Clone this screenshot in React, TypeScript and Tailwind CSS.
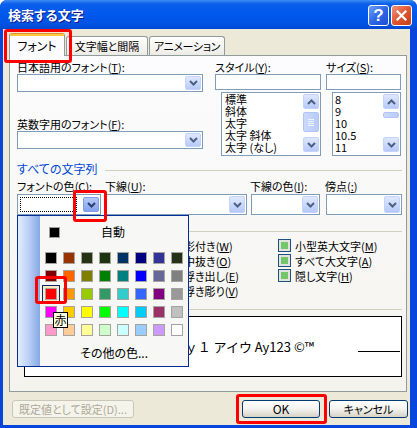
import React from 'react'

const PALETTE = [
  ['#000000', '#993300', '#263214', '#1e3312', '#003366', '#000080', '#333399', '#233218'],
  ['#800000', '#ff6600', '#808000', '#008000', '#008080', '#0000ff', '#666699', '#808080'],
  ['#ff0000', '#ff9900', '#99cc00', '#339966', '#33cccc', '#3366ff', '#800080', '#999999'],
  ['#ff00ff', '#ffcc00', '#ffff00', '#00ff00', '#00ffff', '#00ccff', '#993366', '#c0c0c0'],
  ['#ff99cc', '#ffcc99', '#ffff99', '#ccffcc', '#ccffff', '#99ccff', '#cc99ff', '#ffffff'],
]

const EFFECTS = [
  ['取り消し線', 'K', '影付き', 'W', '小型英大文字', 'M'],
  ['二重取り消し線', 'L', '中抜き', 'O', 'すべて大文字', 'A'],
  ['上付き', 'P', '浮き出し', 'E', '隠し文字', 'H'],
  ['下付き', 'B', '浮き彫り', 'V', '', ''],
]

function Key({ t, k, s = ':' }: { t: string; k: string; s?: string }) {
  return (
    <>
      {t}(<u className="underline-offset-1">{k}</u>){s}
    </>
  )
}

function Chevron({ color = '#4d6185' }: { color?: string }) {
  return (
    <svg width="9" height="6" viewBox="0 0 9 6">
      <path d="M1 1l3.5 3.5L8 1" fill="none" stroke={color} strokeWidth="2" />
    </svg>
  )
}

function UpChevron() {
  return (
    <svg width="9" height="6" viewBox="0 0 9 6">
      <path d="M1 5l3.5-3.5L8 5" fill="none" stroke="#4d6185" strokeWidth="2" />
    </svg>
  )
}

function DropButton({ hot = false }: { hot?: boolean }) {
  return (
    <div
      className={
        hot
          ? 'flex w-[16px] items-center justify-center rounded-[2px] border border-[#7f9de9] bg-gradient-to-b from-[#b5c9fa] to-[#84a1ed]'
          : 'flex w-[16px] items-center justify-center rounded-[2px] border border-[#c3d3fd] bg-gradient-to-b from-[#dfe8fe] to-[#b6c9f7]'
      }
    >
      <Chevron color={hot ? '#2b3e6b' : '#4d6185'} />
    </div>
  )
}

function Combo({ className = '' }: { className?: string }) {
  return (
    <div className={`flex justify-end border border-[#7f9db9] bg-white p-px ${className}`}>
      <DropButton />
    </div>
  )
}

function ScrollBar({ thumb }: { thumb: number }) {
  return (
    <div className="ml-auto mr-px flex w-[16px] shrink-0 flex-col pb-[3px] pt-px">
      <div className="flex h-[15px] items-center justify-center rounded-[2px] border border-[#c3d3fd] bg-gradient-to-b from-[#dfe8fe] to-[#b6c9f7]">
        <UpChevron />
      </div>
      <div
        className="mt-[3px] flex flex-col items-center justify-center gap-px rounded-[2px] border border-[#b1c6f7] bg-gradient-to-r from-[#cad9fc] to-[#b9cbf7]"
        style={{ height: thumb }}
      >
        {thumb > 10 && (
          <>
            <span className="h-px w-[6px] bg-[#eef3fe]" />
            <span className="h-px w-[6px] bg-[#eef3fe]" />
            <span className="h-px w-[6px] bg-[#eef3fe]" />
            <span className="h-px w-[6px] bg-[#eef3fe]" />
          </>
        )}
      </div>
      <div className="flex-1" />
      <div className="flex h-[15px] items-center justify-center rounded-[2px] border border-[#c3d3fd] bg-gradient-to-b from-[#dfe8fe] to-[#b6c9f7]">
        <Chevron />
      </div>
    </div>
  )
}

function Check() {
  return (
    <span className="flex h-[13px] w-[13px] shrink-0 items-center justify-center border border-[#1c5180] bg-[#e3e2dc]">
      <span className="h-[7px] w-[7px] bg-[#73c66b]" />
    </span>
  )
}

function Header({ text, blue = false }: { text: string; blue?: boolean }) {
  return (
    <div className="flex h-[14px] items-center">
      <span className={blue ? 'text-[12px] leading-[14px] text-[#0046d5]' : 'leading-[14px]'}>{text}</span>
      <div className="ml-[8px] mt-[3px] h-px flex-1 bg-[#d0d0bf]" />
    </div>
  )
}

export default function App() {
  return (
    <div className="relative h-[428px] w-[417px] overflow-hidden rounded-t-[7px] bg-[#0845dc] font-['Noto_Sans_CJK_JP','Noto_Sans',sans-serif] text-[11px] text-black [font-feature-settings:'palt']">
      {/* Title bar */}
      <div className="flex h-[29px] items-start bg-[linear-gradient(180deg,#3d8cf5_0%,#0a5ee9_14%,#0058ee_45%,#0054e3_80%,#0048d4_100%)] pl-[8px] pr-[5px]">
        <span className="mt-[7px] text-[13px] font-bold leading-[16px] text-white [text-shadow:1px_1px_#0a1883]">
          検索する文字
        </span>
        <div className="ml-auto mt-[5px] flex gap-[2px]">
          <div className="flex h-[21px] w-[21px] items-center justify-center rounded-[3px] border border-white bg-gradient-to-br from-[#6fa0fb] via-[#2e68e6] to-[#1d4fd3] font-['Liberation_Sans',sans-serif] text-[17px] font-bold leading-none text-white">
            ?
          </div>
          <div className="flex h-[21px] w-[21px] items-center justify-center rounded-[3px] border border-white bg-gradient-to-br from-[#f0937a] via-[#e05530] to-[#c4401c]">
            <svg width="11" height="11" viewBox="0 0 11 11">
              <path d="M1.5 1.5l8 8M9.5 1.5l-8 8" stroke="white" strokeWidth="2.2" strokeLinecap="square" />
            </svg>
          </div>
        </div>
      </div>

      {/* Body */}
      <div className="ml-[3px] mr-[7px] flex h-[396px] flex-col bg-[#ece9d8]">
        {/* Tabs */}
        <div className="flex h-[26px] items-end whitespace-nowrap pl-[6px] text-[12px]">
          <div className="relative z-10 mb-[-1px] flex h-[23px] w-[56px] flex-col rounded-t-[3px] border-x border-t border-x-[#919b9c] border-t-[#e68b2c] bg-[#fcfcfe]">
            <div className="h-[2px] bg-[#ffc73c]" />
            <div className="flex flex-1 items-center justify-center leading-[14px]">フォント</div>
          </div>
          <div className="ml-px flex h-[19px] w-[82px] items-center justify-center rounded-t-[3px] border border-b-0 border-[#919b9c] bg-gradient-to-b from-white to-[#ecebe6] text-[11px] leading-[14px]">
            文字幅と間隔
          </div>
          <div className="ml-px flex h-[19px] w-[76px] items-center justify-center rounded-t-[3px] border border-b-0 border-[#919b9c] bg-gradient-to-b from-white to-[#ecebe6] text-[11px] leading-[14px] tracking-[-0.3px]">
            アニメーション
          </div>
        </div>

        {/* Panel */}
        <div className="ml-[6px] flex h-[337px] w-[398px] flex-col border border-[#919b9c] bg-gradient-to-b from-[#fcfcfe] to-[#f4f3ee] pl-[7px] pr-[4px] pt-[5px]">
          <div className="flex">
            <div className="w-[186px]">
              <div className="h-[13px] whitespace-nowrap leading-[13px]">
                <Key t="日本語用のフォント" k="T" />
              </div>
              <Combo className="h-[18px]" />
              <div className="mt-[26px] h-[13px] whitespace-nowrap leading-[13px]">
                <Key t="英数字用のフォント" k="F" />
              </div>
              <Combo className="h-[18px]" />
            </div>
            <div className="ml-[12px] w-[106px]">
              <div className="h-[13px] whitespace-nowrap leading-[13px]">
                <Key t="スタイル" k="Y" />
              </div>
              <div className="h-[16px] border border-[#7f9db9] bg-white" />
              <div className="ml-[6px] mt-[2px] flex h-[64px] w-[100px] border border-[#7f9db9] bg-white">
                <div className="flex flex-col whitespace-nowrap pl-[3px] text-[11px] leading-[12px]">
                  <span>標準</span>
                  <span>斜体</span>
                  <span>太字</span>
                  <span>太字 斜体</span>
                  <span>太字 (なし)</span>
                </div>
                <ScrollBar thumb={20} />
              </div>
            </div>
            <div className="ml-[5px] w-[76px]">
              <div className="h-[13px] whitespace-nowrap leading-[13px]">
                <Key t="サイズ" k="S" />
              </div>
              <div className="h-[16px] w-[75px] border border-[#7f9db9] bg-white" />
              <div className="ml-[6px] mt-[2px] flex h-[64px] w-[69px] border border-[#7f9db9] bg-white">
                <div className="flex flex-col pl-[2px] text-[11px] leading-[12px]">
                  <span>8</span>
                  <span>9</span>
                  <span>10</span>
                  <span>10.5</span>
                  <span>11</span>
                </div>
                <ScrollBar thumb={6} />
              </div>
            </div>
          </div>

          <div className="mt-[6px]">
            <Header text="すべての文字列" blue />
          </div>

          <div className="mt-[3px] flex">
            <div className="w-[84px]">
              <div className="h-[14px] whitespace-nowrap leading-[14px]">
                <Key t="フォントの色" k="C" />
              </div>
              <div className="mt-px flex h-[21px] border border-[#7f9db9] bg-white p-px">
                <div className="m-px w-[57px] border border-dotted border-black" />
                <div className="ml-auto flex py-px">
                  <DropButton hot />
                </div>
              </div>
            </div>
            <div className="ml-[4px] w-[142px]">
              <div className="h-[14px] whitespace-nowrap leading-[14px]">
                <Key t="下線" k="U" />
              </div>
              <Combo className="mt-px h-[21px]" />
            </div>
            <div className="ml-[4px] w-[69px]">
              <div className="-ml-px h-[14px] whitespace-nowrap leading-[14px]">
                <Key t="下線の色" k="I" />
              </div>
              <Combo className="mt-px h-[21px]" />
            </div>
            <div className="ml-[6px] w-[76px]">
              <div className="-ml-px h-[14px] whitespace-nowrap leading-[14px]">
                <Key t="傍点" k=":" s="" />
              </div>
              <Combo className="mt-px h-[21px]" />
            </div>
          </div>

          <div className="mt-[8px]">
            <Header text="効果" />
          </div>

          <div className="mt-px grid grid-cols-[150px_111px_1fr]">
            {EFFECTS.map((row, i) => (
              <React.Fragment key={i}>
                {[0, 2, 4].map((c) => (
                  <div key={c} className="flex h-[15px] items-center whitespace-nowrap">
                    {row[c] && (
                      <>
                        <Check />
                        <span className="ml-[4px] leading-[14px]">
                          <Key t={row[c]} k={row[c + 1]} s="" />
                        </span>
                      </>
                    )}
                  </div>
                ))}
              </React.Fragment>
            ))}
          </div>

          <div className="mt-[3px]">
            <Header text="プレビュー" />
          </div>

          <div className="ml-[7px] mt-px flex h-[61px] w-[378px] items-center justify-end border border-black bg-white pr-px">
            <span className="whitespace-nowrap text-[13px] leading-[16px] [font-feature-settings:normal]">
              あア亜Ａｙ１ アイウ Ay123 ©™
            </span>
            <span className="ml-[44px] mt-[10px] h-px w-[42px] bg-black" />
          </div>
        </div>

        {/* Buttons */}
        <div className="mt-[8px] flex h-[18px] pl-[9px] pr-[2px]">
          <div className="flex w-[122px] items-center justify-center whitespace-nowrap rounded-[3px] border border-[#c9c7ba] bg-[#f5f4ea] leading-[14px] text-[#aca899]">
            既定値として設定(D)...
          </div>
          <div className="ml-auto flex w-[78px] items-center justify-center rounded-[3px] border border-[#003c74] bg-gradient-to-b from-white via-[#f3f3ef] to-[#d8d2c6] text-[12px] leading-[14px]">
            OK
          </div>
          <div className="ml-[9px] flex w-[79px] items-center justify-center rounded-[3px] border border-[#003c74] bg-gradient-to-b from-white via-[#f3f3ef] to-[#d8d2c6] leading-[14px]">
            キャンセル
          </div>
        </div>
      </div>

      {/* Colour popup */}
      <div className="absolute left-[17px] top-[215px] z-20 flex h-[152px] w-[172px] border border-[#002d96] bg-[#f7f7f5]">
        <div className="w-[22px] bg-gradient-to-r from-[#e3eefd] via-[#b9cff5] to-[#86a8e2]" />
        <div className="flex flex-1 flex-col">
          <div className="ml-[9px] mt-[9px] flex items-center">
            <span className="h-[11px] w-[11px] border border-[#9d9d96] bg-black" />
            <span className="ml-[41px] text-[12px] leading-[14px]">自動</span>
          </div>
          <div className="ml-[2px] mt-[10px] grid grid-cols-[repeat(8,18px)]">
            {PALETTE.flat().map((c, i) => (
              <div
                key={i}
                className={
                  i === 16
                    ? 'flex h-[18px] w-[18px] items-center justify-center border border-[#0a246a] bg-[#fbe9c5]'
                    : 'flex h-[18px] w-[18px] items-center justify-center'
                }
              >
                <span className="h-[12px] w-[12px] border border-[#a5a39b]" style={{ background: c }} />
              </div>
            ))}
          </div>
          <div className="mt-[7px] text-center text-[12px] leading-[14px]">その他の色...</div>
        </div>
      </div>

      {/* Tooltip */}
      <div className="absolute left-[53px] top-[312px] z-40 flex h-[16px] w-[15px] items-center justify-center border border-black bg-[#ffffe1] text-[12px] leading-[14px]">
        赤
      </div>

      {/* Red highlight marks */}
      <div className="pointer-events-none absolute left-[4px] top-[29px] z-30 h-[34px] w-[68px] rounded-[3px] border-[3px] border-[#ff0000]" />
      <div className="pointer-events-none absolute left-[73px] top-[190px] z-30 h-[32px] w-[34px] rounded-[3px] border-[3px] border-[#ff0000]" />
      <div className="pointer-events-none absolute left-[35px] top-[276px] z-30 h-[28px] w-[32px] rounded-[3px] border-[3px] border-[#ff0000]" />
      <div className="pointer-events-none absolute left-[236px] top-[394px] z-30 h-[30px] w-[91px] rounded-[3px] border-[3px] border-[#ff0000]" />
    </div>
  )
}
